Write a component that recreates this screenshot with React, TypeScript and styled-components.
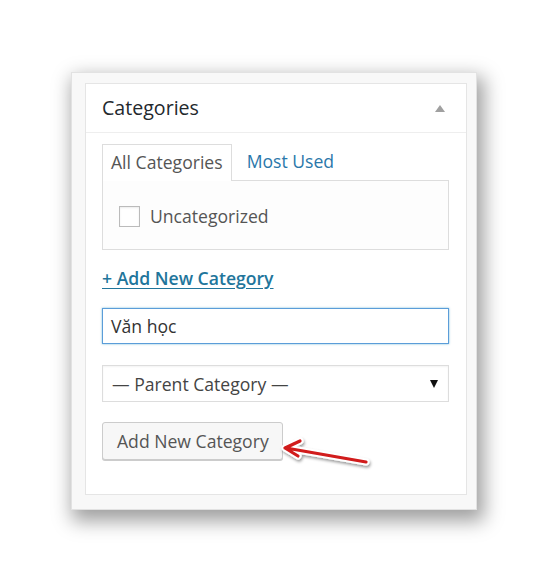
import React from "react";
import styled, { createGlobalStyle } from "styled-components";

const GlobalStyle = createGlobalStyle`
  html, body {
    margin: 0;
    padding: 0;
    background: #fff;
  }
  body {
    font-family: "Open Sans", "Liberation Sans", sans-serif;
  }
`;

const Page = styled.div`
  width: 548px;
  height: 582px;
  padding: 72px 0 0 71px;
  box-sizing: border-box;
`;

const Frame = styled.div`
  width: 406px;
  height: 438px;
  box-sizing: border-box;
  padding: 10px 9px 14px 13px;
  background: #f8f8f8;
  border: 1px solid #e2e2e2;
  box-shadow: 4px 8px 18px 3px rgba(0, 0, 0, 0.38);
`;

const Panel = styled.div`
  height: 100%;
  box-sizing: border-box;
  background: #fff;
  border: 1px solid #e5e5e5;
  display: flex;
  flex-direction: column;
`;

const Header = styled.div`
  height: 48px;
  border-bottom: 1px solid #eee;
  display: flex;
  align-items: center;
  justify-content: space-between;
  padding: 0 21px 0 16px;
`;

const Title = styled.h2`
  margin: 0;
  font-size: 19.6px;
  font-weight: 400;
  color: #23282d;
  transform: translateY(-1px);
`;

const Toggle = styled.span`
  width: 0;
  height: 0;
  border-left: 5px solid transparent;
  border-right: 5px solid transparent;
  border-bottom: 7px solid #a0a0a0;
`;

const Body = styled.div`
  padding: 10px 17px 0 16px;
  display: flex;
  flex-direction: column;
  font-size: 17.6px;
`;

const Tabs = styled.div`
  display: flex;
  align-items: flex-end;
  height: 37px;
`;

const Tab = styled.div<{ $active?: boolean }>`
  height: 37px;
  box-sizing: border-box;
  padding: 0 8px 2px;
  margin-right: 6px;
  display: flex;
  align-items: center;
  color: ${(p) => (p.$active ? "#555" : "#2a77aa")};
  border: 1px solid ${(p) => (p.$active ? "#ddd" : "transparent")};
  border-bottom: none;
  background: ${(p) => (p.$active ? "#fff" : "transparent")};
  position: relative;
  top: ${(p) => (p.$active ? "1px" : "0")};
  z-index: 1;
`;

const TabBox = styled.div`
  height: 70px;
  box-sizing: border-box;
  border: 1px solid #ddd;
  background: #fdfdfd;
  display: flex;
  align-items: center;
  padding: 0 0 0 16px;
`;

const CheckRow = styled.label`
  display: flex;
  align-items: center;
  gap: 10px;
  color: #555;
  margin-top: 2px;
`;

const Checkbox = styled.span`
  width: 21px;
  height: 21px;
  box-sizing: border-box;
  border: 1px solid #bbb;
  background: #fff;
  box-shadow: inset 0 1px 2px rgba(0, 0, 0, 0.08);
`;

const AddLink = styled.a`
  margin-top: 16px;
  font-weight: 600;
  color: #21759b;
  text-decoration: underline;
  text-underline-offset: 3px;
  line-height: 24px;
  align-self: flex-start;
`;

const TextInput = styled.div`
  margin-top: 18px;
  height: 36px;
  box-sizing: border-box;
  border: 1px solid #5b9dd9;
  box-shadow: 0 0 2px rgba(30, 140, 190, 0.6);
  padding: 0 8px;
  display: flex;
  align-items: center;
  color: #333;
`;

const Select = styled.div`
  margin-top: 21px;
  height: 37px;
  box-sizing: border-box;
  border: 1px solid #ddd;
  padding: 0 8px 0 9px;
  display: flex;
  align-items: center;
  justify-content: space-between;
  color: #444;
  box-shadow: inset 0 1px 2px rgba(0, 0, 0, 0.05);
`;

const Caret = styled.span`
  width: 0;
  height: 0;
  border-left: 4px solid transparent;
  border-right: 4px solid transparent;
  border-top: 8px solid #111;
  margin-right: 2px;
`;

const ButtonRow = styled.div`
  margin-top: 20px;
  position: relative;
  display: flex;
`;

const Button = styled.button`
  height: 38px;
  padding: 0 13px 0 14px;
  font-family: "Open Sans", "Liberation Sans", sans-serif;
  font-size: 17.6px;
  color: #555;
  background: #f7f7f7;
  border: 1px solid #ccc;
  border-radius: 3px;
  box-shadow: 0 1px 0 #ccc;
`;

const Pointer = styled.svg`
  position: absolute;
  left: 176px;
  top: 12px;
  overflow: visible;
`;

const RedArrow = () => (
  <Pointer width="90" height="30" viewBox="0 0 90 30">
    <defs>
      <filter id="sh" x="-20%" y="-50%" width="140%" height="200%">
        <feDropShadow dx="1" dy="2" stdDeviation="1.5" floodOpacity="0.4" />
      </filter>
    </defs>
    <g filter="url(#sh)" fill="none" strokeLinecap="round" strokeLinejoin="round">
      <path d="M88 28 L8 14 M22 7 L7 14 L20 22" stroke="#fff" strokeWidth="7" />
      <path d="M88 28 L8 14 M22 7 L7 14 L20 22" stroke="#d11a1a" strokeWidth="3.2" />
    </g>
  </Pointer>
);

export default function App() {
  return (
    <>
      <GlobalStyle />
      <Page>
        <Frame>
          <Panel>
            <Header>
              <Title>Categories</Title>
              <Toggle />
            </Header>
            <Body>
              <Tabs>
                <Tab $active>All Categories</Tab>
                <Tab>Most Used</Tab>
              </Tabs>
              <TabBox>
                <CheckRow>
                  <Checkbox />
                  Uncategorized
                </CheckRow>
              </TabBox>
              <AddLink href="#">+ Add New Category</AddLink>
              <TextInput>Văn học</TextInput>
              <Select>
                <span>— Parent Category —</span>
                <Caret />
              </Select>
              <ButtonRow>
                <Button>Add New Category</Button>
                <RedArrow />
              </ButtonRow>
            </Body>
          </Panel>
        </Frame>
      </Page>
    </>
  );
}
